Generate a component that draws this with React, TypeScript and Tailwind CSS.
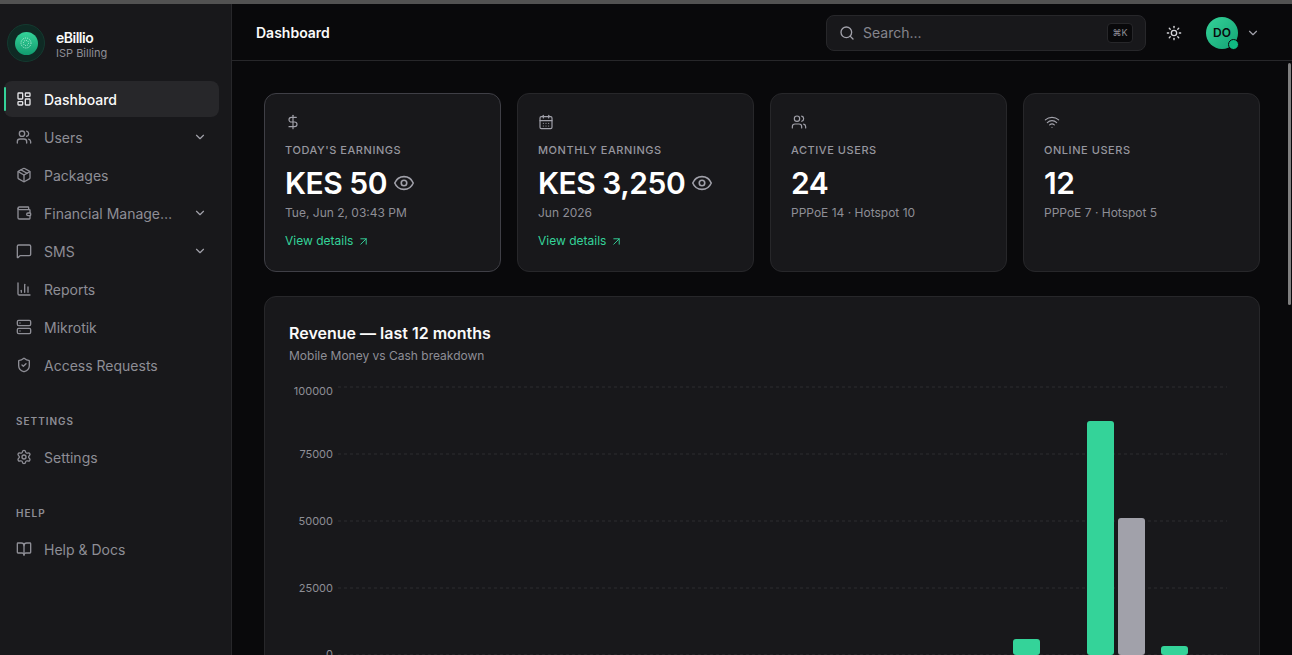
import { BookOpen, CalendarDays, ChartColumn, ChevronDown, DollarSign, Eye, LayoutDashboard, MessageSquare, Package, Search, Server, Settings, ShieldCheck, Sun, ArrowUpRight, Users, Wallet, Wifi } from "lucide-react";

const navMain = [
  { label: "Dashboard", icon: LayoutDashboard, active: true },
  { label: "Users", icon: Users, more: true },
  { label: "Packages", icon: Package },
  { label: "Financial Management", icon: Wallet, more: true },
  { label: "SMS", icon: MessageSquare, more: true },
  { label: "Reports", icon: ChartColumn },
  { label: "Mikrotik", icon: Server },
  { label: "Access Requests", icon: ShieldCheck },
];

function NavItem({ item }: { item: any }) {
  const Icon = item.icon;
  return (
    <div className={`relative flex h-9 items-center rounded-lg pl-3 pr-3 text-sm ${item.active ? "bg-[#27272a] font-medium text-[#fafafa]" : "text-[#8e8e96]"}`}>
      {item.active && <span className="absolute left-0 top-[6px] h-6 w-[2px] rounded-full bg-[#34d399]" />}
      <Icon size={16} strokeWidth={2} className={item.active ? "shrink-0 text-[#e4e4e7]" : "shrink-0"} />
      <span className="ml-3 min-w-0 flex-1 truncate pt-[2px]">{item.label}</span>
      {item.more && <ChevronDown size={14} className="ml-3 shrink-0 text-[#a1a1aa]" />}
    </div>
  );
}

function Logo() {
  return (
    <div className="flex h-[38px] w-[38px] shrink-0 items-center justify-center rounded-full border border-[#143a30] bg-[#0f2a24]">
      <div className="flex h-[23px] w-[23px] items-center justify-center rounded-full bg-gradient-to-b from-[#34d399] to-[#109c6f]">
        <svg width="12" height="12" viewBox="0 0 12 12" fill="none" stroke="#b5efd8" strokeWidth="1">
          <circle cx="6" cy="6" r="5" strokeDasharray="1 1" />
          <circle cx="6" cy="6" r="2.6" strokeDasharray="1 1" />
        </svg>
      </div>
    </div>
  );
}

function Sidebar() {
  return (
    <aside className="flex w-[232px] shrink-0 flex-col border-r border-[#27272a] bg-[#18181b]">
      <div className="flex h-[57px] items-center gap-[11px] pl-[7px] pt-[21px]">
        <Logo />
        <div className="pt-[2px]">
          <div className="text-sm font-semibold leading-[17px] tracking-[-0.5px] text-[#fafafa]">eBillio</div>
          <div className="text-[11px] leading-[14px] text-[#8e8e96]">ISP Billing</div>
        </div>
      </div>
      <nav className="flex flex-col gap-[2px] pl-1 pr-3 pt-5">
        {navMain.map((i) => <NavItem key={i.label} item={i} />)}
      </nav>
      <div className="mt-[30px] pl-4 text-[10px] font-semibold leading-4 tracking-[0.1em] text-[#8e8e96]">SETTINGS</div>
      <nav className="mt-[10px] pl-1 pr-3"><NavItem item={{ label: "Settings", icon: Settings }} /></nav>
      <div className="mt-[30px] pl-4 text-[10px] font-semibold leading-4 tracking-[0.1em] text-[#8e8e96]">HELP</div>
      <nav className="mt-[10px] pl-1 pr-3"><NavItem item={{ label: "Help & Docs", icon: BookOpen }} /></nav>
    </aside>
  );
}

function Header() {
  return (
    <header className="flex h-[57px] shrink-0 items-center border-b border-[#27272a] pl-6 pr-[32px] pt-[2px]">
      <h1 className="text-sm font-semibold text-[#fafafa]">Dashboard</h1>
      <div className="ml-auto flex h-9 w-[320px] items-center rounded-lg border border-[#27272a] bg-[#18181b] pl-3 pr-3">
        <Search size={16} className="text-[#a1a1aa]" />
        <span className="ml-2 flex-1 text-sm text-[#85858d]">Search...</span>
        <kbd className="flex h-5 w-[26px] items-center justify-center rounded border border-[#27272a] bg-[#09090b] font-['Inter'] text-[9px] text-[#8e8e96]">⌘K</kbd>
      </div>
      <Sun size={16} className="ml-5 text-[#d4d4d8]" />
      <div className="relative ml-6 flex h-8 w-8 items-center justify-center rounded-full bg-gradient-to-br from-[#34d399] to-[#10a374] text-xs font-semibold text-[#09090b]">
        DO
        <span className="absolute -bottom-px -right-px h-[11px] w-[11px] rounded-full border border-[#09090b] bg-[#10b981]" />
      </div>
      <ChevronDown size={14} className="ml-2 text-[#a1a1aa]" />
    </header>
  );
}

function StatCard({ icon: Icon, label, value, sub, link, hover }: { icon: any; label: string; value: string; sub: string; link?: boolean; hover?: boolean }) {
  return (
    <div className={`h-[179px] rounded-xl border bg-[#18181b] p-5 ${hover ? "border-[#3f3f46]" : "border-[#27272a]"}`}>
      <Icon size={16} strokeWidth={1.75} className="text-[#a1a1aa]" />
      <div className="mt-[12px] text-[11px] font-medium leading-4 tracking-[0.05em] text-[#96969e]">{label}</div>
      <div className="mt-[7px] flex items-center gap-[6px] text-[30px] font-semibold leading-9 tracking-[-0.5px] text-white">
        {value}
        {link && <Eye size={22} strokeWidth={1.75} className="text-[#a1a1aa]" />}
      </div>
      <div className="mt-1 text-xs leading-4 text-[#8e8e96]">{sub}</div>
      {link && (
        <div className="mt-3 flex items-center gap-1 text-xs leading-4 text-[#34d399]">
          View details <ArrowUpRight size={13} strokeWidth={1.75} />
        </div>
      )}
    </div>
  );
}

function RevenueChart() {
  const ticks = [
    { label: "100000", y: 7, ty: 15 },
    { label: "75000", y: 74, ty: 78 },
    { label: "50000", y: 141, ty: 145 },
    { label: "25000", y: 208, ty: 212 },
    { label: "0", y: 275, ty: 278 },
  ];
  const bars = [
    { x: 724, y: 259, color: "#34d399" },
    { x: 798, y: 41, color: "#34d399" },
    { x: 829, y: 138, color: "#a1a1aa" },
    { x: 872, y: 266, color: "#34d399" },
  ];
  return (
    <svg width={946} height={290} className="mt-4 block">
      {ticks.map((t) => (
        <g key={t.label}>
          <line x1={49} x2={938} y1={t.y} y2={t.y} stroke="#2c2c30" strokeDasharray="3 3" />
          <text x={44} y={t.ty} textAnchor="end" fontSize={11} fill="#8e8e96">{t.label}</text>
        </g>
      ))}
      {bars.map((b) => (
        <rect key={b.x} x={b.x} y={b.y} width={27} height={275 - b.y} rx={3} fill={b.color} />
      ))}
    </svg>
  );
}

export default function App() {
  return (
    <div className="flex h-screen flex-col overflow-hidden bg-[#09090b] font-['Inter',sans-serif]">
      <div className="h-1 shrink-0 bg-[#525252]" />
      <div className="flex min-h-0 flex-1">
        <Sidebar />
        <main className="relative flex min-w-0 flex-1 flex-col overflow-hidden">
          <Header />
          <div className="px-8 pt-8">
            <div className="grid grid-cols-4 gap-4">
              <StatCard icon={DollarSign} label="TODAY'S EARNINGS" value="KES 50" sub="Tue, Jun 2, 03:43 PM" link hover />
              <StatCard icon={CalendarDays} label="MONTHLY EARNINGS" value="KES 3,250" sub="Jun 2026" link />
              <StatCard icon={Users} label="ACTIVE USERS" value="24" sub="PPPoE 14 · Hotspot 10" />
              <StatCard icon={Wifi} label="ONLINE USERS" value="12" sub="PPPoE 7 · Hotspot 5" />
            </div>
            <section className="mt-6 rounded-xl border border-[#27272a] bg-[#18181b] p-6">
              <h2 className="text-base font-semibold leading-6 text-[#fafafa]">Revenue — last 12 months</h2>
              <p className="mt-[3px] text-xs leading-4 text-[#8e8e96]">Mobile Money vs Cash breakdown</p>
              <RevenueChart />
            </section>
          </div>
          <div className="absolute right-[1px] top-[59px] h-[242px] w-[3px] rounded-full bg-[#7f7f7f]" />
        </main>
      </div>
    </div>
  );
}
